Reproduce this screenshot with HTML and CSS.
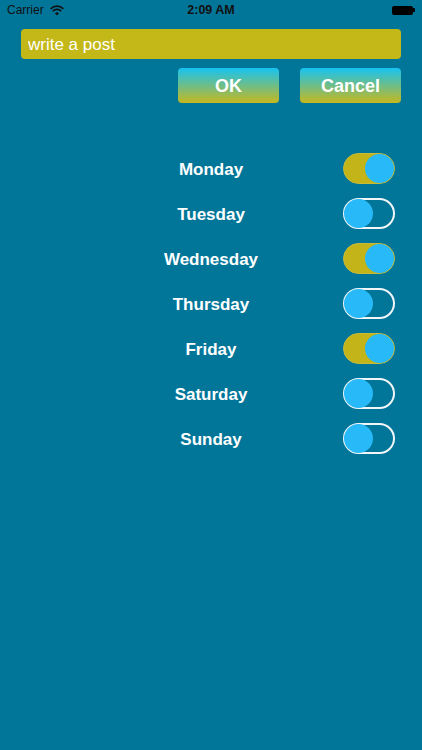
FILE: index.html
```html
<!DOCTYPE html>
<html lang="en">
<head>
  <meta charset="UTF-8" />
  <meta name="viewport" content="width=device-width, initial-scale=1.0"/>
  <title>Post Scheduler</title>
  <link rel="stylesheet" href="styles.css">
</head>
<body>
  <!-- status bar -->
  <div class="status-bar">
    <div class="carrier">
      Carrier
      <svg class="wifi" width="14" height="11" viewBox="0 0 13 10">
        <path d="M0.6 3.4 A8.5 8.5 0 0 1 12.4 3.4" fill="none" stroke="#111" stroke-width="1.6"/>
        <path d="M2.6 5.5 A5.6 5.6 0 0 1 10.4 5.5" fill="none" stroke="#111" stroke-width="1.6"/>
        <path d="M4.6 7.6 A2.7 2.7 0 0 1 8.4 7.6 L6.5 9.6 Z" fill="#111"/>
      </svg>
    </div>
    <div class="time">2:09 AM</div>
    <div class="battery">
      <span class="battery-body"></span><span class="battery-tip"></span>
    </div>
  </div>

  <div class="composer">
    <input type="text" class="post-input" value="write a post" />
    <div class="actions">
      <button class="grad-button">OK</button>
      <button class="grad-button">Cancel</button>
    </div>
  </div>

  <div class="days">
    <div class="day-row"><span class="day-label">Monday</span><label class="switch on"><span class="knob"></span></label></div>
    <div class="day-row"><span class="day-label">Tuesday</span><label class="switch"><span class="knob"></span></label></div>
    <div class="day-row"><span class="day-label">Wednesday</span><label class="switch on"><span class="knob"></span></label></div>
    <div class="day-row"><span class="day-label">Thursday</span><label class="switch"><span class="knob"></span></label></div>
    <div class="day-row"><span class="day-label">Friday</span><label class="switch on"><span class="knob"></span></label></div>
    <div class="day-row"><span class="day-label">Saturday</span><label class="switch"><span class="knob"></span></label></div>
    <div class="day-row"><span class="day-label">Sunday</span><label class="switch"><span class="knob"></span></label></div>
  </div>
</body>
</html>
```

FILE: styles.css
```css
body {
  font-family: 'Liberation Sans', Arial, sans-serif;
  background-color: #027699;
  margin: 0;
  width: 422px;
  height: 750px;
  overflow: hidden;
  color: white;
}
.status-bar {
  height: 20px;
  display: grid;
  grid-template-columns: 1fr auto 1fr;
  align-items: center;
  padding: 0 7px;
  font-size: 12px;
  color: #111;
}
.carrier {
  display: flex;
  align-items: center;
  gap: 6px;
}
.time {
  font-weight: bold;
  font-size: 12.5px;
}
.battery {
  justify-self: end;
  display: flex;
  align-items: center;
}
.battery-body {
  width: 21px;
  height: 9px;
  background: #000;
  border-radius: 2px;
}
.battery-tip {
  width: 2px;
  height: 4px;
  background: #000;
  border-radius: 0 1px 1px 0;
}
.composer {
  padding: 9px 21px 0 21px;
}
.post-input {
  display: block;
  box-sizing: border-box;
  width: 100%;
  height: 30px;
  border: none;
  border-radius: 4px;
  background-color: #c4b718;
  color: white;
  font-family: inherit;
  font-size: 17px;
  padding: 2px 7px 0 7px;
  outline: none;
}
.actions {
  display: flex;
  justify-content: flex-end;
  gap: 21px;
  margin-top: 9px;
}
.grad-button {
  width: 101px;
  height: 35px;
  border: none;
  border-radius: 4px;
  background: linear-gradient(to bottom, #17c3f2, #c6b81e);
  color: white;
  font-family: inherit;
  font-weight: bold;
  font-size: 18px;
  padding-top: 2px;
  cursor: pointer;
}
.days {
  margin-top: 43px;
}
.day-row {
  height: 45px;
  display: grid;
  grid-template-columns: 1fr auto 1fr;
  align-items: center;
  padding-right: 27px;
}
.day-label {
  grid-column: 2;
  font-weight: bold;
  font-size: 17px;
  padding-left: 27px;
  padding-top: 3px;
}
.switch {
  grid-column: 3;
  justify-self: end;
  box-sizing: border-box;
  width: 52px;
  height: 31px;
  border-radius: 16px;
  border: 2px solid #f2f6f8;
  display: flex;
  align-items: center;
  padding: 0;
}
.knob {
  width: 29px;
  height: 29px;
  margin-left: -1px;
  border-radius: 50%;
  background-color: #27b9f8;
}
.switch.on {
  background-color: #c3b41a;
  border: 1px solid #c8bb3a;
  justify-content: flex-end;
}
.switch.on .knob {
  margin-left: 0;
}
```
